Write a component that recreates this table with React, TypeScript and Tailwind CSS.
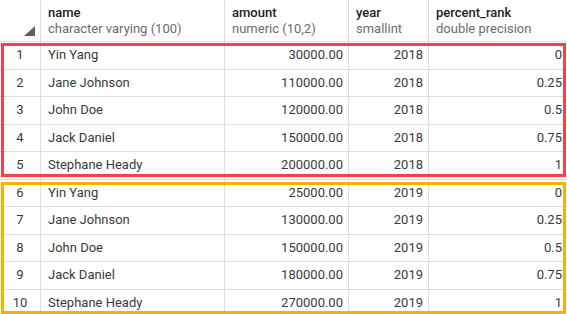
import React from 'react';

const COLUMNS = [
  { name: 'name', type: 'character varying (100)' },
  { name: 'amount', type: 'numeric (10,2)' },
  { name: 'year', type: 'smallint' },
  { name: 'percent_rank', type: 'double precision' },
];

const ROWS = [
  ['Yin Yang', '30000.00', '2018', '0'],
  ['Jane Johnson', '110000.00', '2018', '0.25'],
  ['John Doe', '120000.00', '2018', '0.5'],
  ['Jack Daniel', '150000.00', '2018', '0.75'],
  ['Stephane Heady', '200000.00', '2018', '1'],
  ['Yin Yang', '25000.00', '2019', '0'],
  ['Jane Johnson', '130000.00', '2019', '0.25'],
  ['John Doe', '150000.00', '2019', '0.5'],
  ['Jack Daniel', '180000.00', '2019', '0.75'],
  ['Stephane Heady', '270000.00', '2019', '1'],
];

const GRID = 'grid grid-cols-[41px_184px_124px_80px_1fr]';

export default function App() {
  return (
    <div className="relative w-[567px] h-[314px] overflow-hidden bg-white text-[13px] text-[#3a3a3a]"
      style={{ fontFamily: "Roboto, 'Liberation Sans', sans-serif" }}>
      {/* Header */}
      <div className={`${GRID} h-[42px] border-b border-[#dcdde3]`}>
        <div className="relative border-r border-[#dcdde3]">
          <svg className="absolute left-[24px] top-[26px]" width="11" height="10" viewBox="0 0 11 10">
            <polygon points="11,0 11,10 0,10" fill="#5f5f5f" />
          </svg>
        </div>
        {COLUMNS.map((col, i) => (
          <div key={col.name}
            className={`flex flex-col justify-center pl-[7px] leading-[16px] ${i < 3 ? 'border-r border-[#dcdde3]' : ''}`}>
            <span className="font-medium text-[#222]">{col.name}</span>
            <span className="text-[#6b6b6b]">{col.type}</span>
          </div>
        ))}
      </div>

      {/* Rows */}
      {ROWS.map((row, r) => (
        <div key={r} className={`${GRID} h-[27.5px] border-b border-[#dcdde3] leading-[26.5px]`}>
          <div className="text-center border-r border-[#dcdde3]">{r + 1}</div>
          <div className="pl-[7px] border-r border-[#dcdde3]">{row[0]}</div>
          <div className="text-right pr-[5px] border-r border-[#dcdde3]">{row[1]}</div>
          <div className="text-right pr-[5px] border-r border-[#dcdde3]">{row[2]}</div>
          <div className="text-right pr-[5px]">{row[3]}</div>
        </div>
      ))}

      {/* Group highlights */}
      <div className="absolute left-[1px] top-[43px] w-[565px] h-[134px] border-[3px] border-[#f7404a]" />
      <div className="absolute left-[1px] top-[182px] w-[565px] h-[132px] border-[3px] border-[#fbb000]" />
    </div>
  );
}
